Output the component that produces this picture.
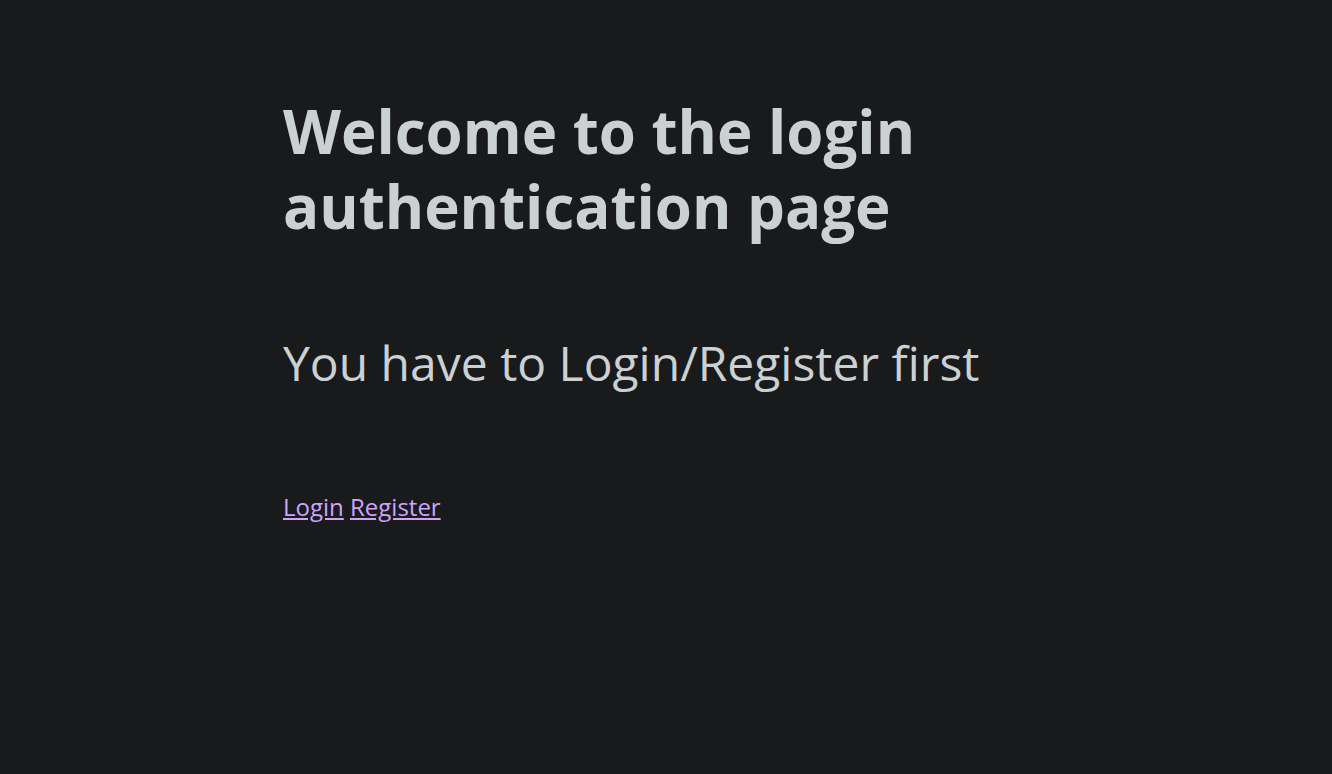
export default function App() {
  return (
    <div className="min-h-screen bg-[#181a1b] font-['Open_Sans',sans-serif] text-[#cbd1d3]">
      <main className="mx-auto w-[766px] pt-[94px]">
        <h1 className="text-[60px] font-bold leading-[75px]">
          Welcome to the login authentication page
        </h1>
        <h2 className="mt-[87px] text-[48px] leading-[64px]">You have to Login/Register first</h2>
        <nav className="mt-[96px] text-[24px] leading-[32px]">
          <a href="#" className="text-[#d0a3fb] underline">Login</a>{" "}
          <a href="#" className="text-[#d0a3fb] underline">Register</a>
        </nav>
      </main>
    </div>
  );
}
